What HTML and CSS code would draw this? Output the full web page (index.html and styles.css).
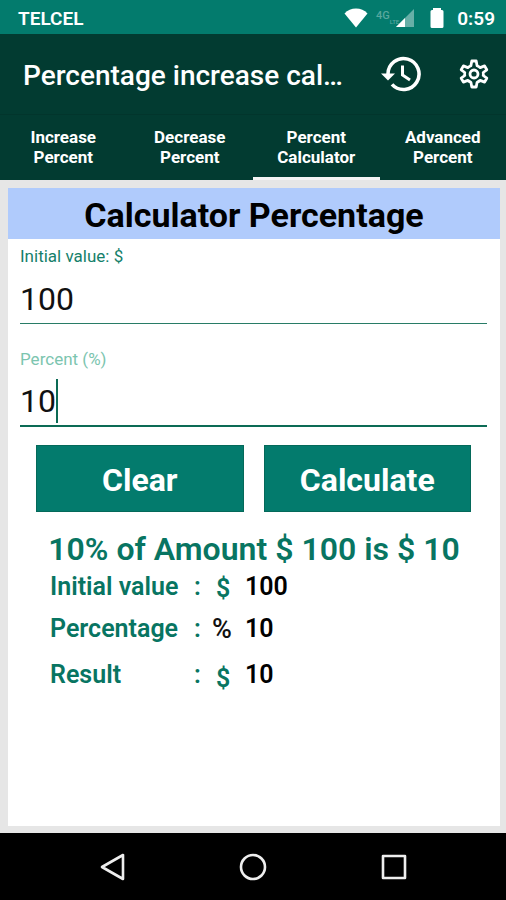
FILE: index.html
```html
<!DOCTYPE html>
<html lang="en">
<head>
<meta charset="utf-8">
<meta name="viewport" content="width=device-width, initial-scale=1">
<title>Percentage increase calculator</title>
<link rel="stylesheet" href="styles.css">
</head>
<body>
<div class="status">
  <span class="carrier">TELCEL</span>
  <svg class="wifi" width="24" height="20" viewBox="0 0 24 20" fill="#fff" aria-hidden="true"><path d="M12 19.500L.5 5.500C3.500 2.200 7.500.5 12 .5s8.500 1.700 11.500 5z"/></svg>
  <span class="network"><span>4G</span><small>LTE</small></span>
  <svg class="signal" width="18" height="18" viewBox="0 0 18 18" aria-hidden="true"><path d="M18 0v18H0z" fill="#fff" opacity=".4"/><path d="M9 9v9H0z" fill="#fff"/></svg>
  <svg class="battery" width="14" height="20" viewBox="0 0 14 20" fill="#fff" aria-hidden="true"><path d="M3 0h8v2h1q1.500 0 1.500 1.500v15q0 1.500-1.500 1.500H2q-1.500 0-1.500-1.500v-15q0-1.500 1.500-1.500h1z"/></svg>
  <time>0:59</time>
</div>
<header class="appbar">
  <h1>Percentage increase cal…</h1>
  <button class="icon" type="button" aria-label="History">
    <svg width="42" height="40" viewBox="0 0 42 40" fill="none" stroke="#fff" aria-hidden="true"><path d="M8 20a15.500 15.500 0 1 1 4 10.400" stroke-width="3.600"/><path d="M1 19.500h14L8 26.500z" fill="#fff" stroke="none"/><path d="M22.500 11.500v9.500l7.500 5" stroke-width="3"/></svg>
  </button>
  <button class="icon" type="button" aria-label="Settings">
    <svg width="30" height="32" viewBox="0 0 30 32" fill="none" stroke="#fff" stroke-width="2.800" stroke-linejoin="round" aria-hidden="true"><path d="M12.800 3h4.400l.9 4.800q1.800.7 3.100 1.800l4.400-1.700 2.200 3.900-3.600 2.700q.4 1.500 0 3l3.600 2.700-2.200 3.900-4.400-1.700q-1.300 1.100-3.100 1.800l-.9 4.800h-4.400l-.9-4.800q-1.800-.7-3.100-1.800l-4.400 1.700-2.200-3.900 3.600-2.700q-.4-1.500 0-3l-3.600-2.700 2.200-3.900 4.400 1.700q1.300-1.100 3.100-1.800z"/><circle cx="15" cy="16" r="4"/></svg>
  </button>
</header>
<nav class="tabs">
  <a href="#increase">Increase<br>Percent</a>
  <a href="#decrease">Decrease<br>Percent</a>
  <a class="active" href="#percent" aria-current="page">Percent<br>Calculator</a>
  <a href="#advanced">Advanced<br>Percent</a>
</nav>
<main>
  <section class="card">
    <h2>Calculator Percentage</h2>
    <form>
      <div class="field">
        <label for="initial">Initial value: $</label>
        <input id="initial" type="text" inputmode="decimal" value="100">
      </div>
      <div class="field focused">
        <label for="percent">Percent (%)</label>
        <div class="entry">
          <input id="percent" type="text" inputmode="decimal" value="10">
          <span class="caret"></span>
        </div>
      </div>
      <div class="actions">
        <button type="reset">Clear</button>
        <button type="button">Calculate</button>
      </div>
    </form>
    <p class="summary">10% of Amount $ 100 is $ 10</p>
    <table class="results">
      <tr><th scope="row">Initial value</th><td class="colon">:</td><td class="unit">$</td><td>100</td></tr>
      <tr><th scope="row">Percentage</th><td class="colon">:</td><td class="unit dark">%</td><td>10</td></tr>
      <tr class="total"><th scope="row">Result</th><td class="colon">:</td><td class="unit">$</td><td>10</td></tr>
    </table>
  </section>
</main>
<footer class="navbar">
  <button class="icon" type="button" aria-label="Back"><svg width="28" height="28" viewBox="0 0 28 28" fill="none" stroke="#eee" stroke-width="2.600" stroke-linejoin="round" aria-hidden="true"><path d="M25 2v24L4 14z"/></svg></button>
  <button class="icon" type="button" aria-label="Home"><svg width="28" height="28" viewBox="0 0 28 28" fill="none" stroke="#eee" stroke-width="2.600" aria-hidden="true"><circle cx="14" cy="14" r="12"/></svg></button>
  <button class="icon" type="button" aria-label="Recent apps"><svg width="28" height="28" viewBox="0 0 28 28" fill="none" stroke="#eee" stroke-width="2.600" stroke-linejoin="round" aria-hidden="true"><path d="M3 3h22v22H3z"/></svg></button>
</footer>
</body>
</html>
```
FILE: styles.css
```css
* { box-sizing: border-box; }

body {
  margin: 0;
  min-height: 100vh;
  display: flex;
  flex-direction: column;
  background: #e6e6e6;
  color: #000;
  font-family: Roboto, "Liberation Sans", sans-serif;
}

h1, h2, p { margin: 0; }

button, input { font: inherit; }

.status {
  display: flex;
  align-items: center;
  height: 34px;
  padding: 2px 11px 0 18px;
  background: #037b6d;
  color: #fff;
  font-size: 19px;
  font-weight: 600;
}

.carrier { flex: 1; }

.network {
  display: flex;
  align-items: center;
  margin-left: 8px;
  color: #58a89e;
  font-size: 11px;
  font-weight: 500;
}

.network span { padding-bottom: 6px; }

.network small {
  font-size: 6px;
  padding-top: 6px;
}

.signal { margin-left: -3px; }

.battery { margin: 0 13px 0 16px; }

.icon {
  display: flex;
  padding: 0;
  border: 0;
  background: none;
}

.appbar {
  display: flex;
  align-items: center;
  height: 80px;
  padding: 0 18px 0 23px;
  background: #023b31;
  color: #fff;
}

.appbar h1 {
  flex: 1;
  padding-top: 3px;
  white-space: nowrap;
  font-size: 28px;
  line-height: 36px;
  font-weight: 500;
}

.appbar .icon { margin-left: 37px; }

.tabs {
  display: grid;
  grid-template-columns: repeat(4, 1fr);
  height: 66px;
  background: #023b31;
  border-top: 1px solid #02352c;
}

.tabs a {
  padding-top: 12px;
  border-bottom: 3px solid transparent;
  color: #fff;
  font-size: 17px;
  line-height: 20px;
  font-weight: 700;
  text-align: center;
  text-decoration: none;
}

.tabs .active { border-color: #f4f4f4; }

main {
  flex: 1;
  display: flex;
  padding: 8px 6px 7px 8px;
}

.card {
  flex: 1;
  background: #fff;
}

.card h2 {
  padding-top: 3px;
  background: #b0cbfc;
  font-size: 34px;
  line-height: 48px;
  font-weight: 700;
  text-align: center;
}

form { padding: 7px 13px 0 12px; }

.field {
  display: flex;
  flex-direction: column;
  margin-bottom: 25px;
}

.field label {
  color: #15806a;
  font-size: 17px;
  line-height: 20px;
}

.field input {
  width: 100%;
  height: 58px;
  padding: 8px 0 0;
  border: 0;
  border-bottom: 1px solid #287c66;
  border-radius: 0;
  outline: 0;
  background: none;
  color: #111;
  font-size: 32px;
}

.focused { margin-bottom: 18px; }

.focused label { color: #7cc5af; }

.focused input { border-bottom: 2px solid #0c6b55; }

.entry {
  display: flex;
  position: relative;
}

.caret {
  position: absolute;
  left: 36px;
  top: 10px;
  width: 2px;
  height: 44px;
  background: #0c6b55;
}

.actions {
  display: grid;
  grid-template-columns: 1fr 1fr;
  gap: 20px;
  padding: 0 16px;
}

.actions button {
  height: 67px;
  padding: 2px 0 0;
  border: 1px solid #04695a;
  border-radius: 0;
  background: #037b6d;
  color: #fff;
  font-size: 32px;
  font-weight: 700;
}

.summary {
  margin-top: 18px;
  color: #087562;
  font-size: 32px;
  line-height: 38px;
  font-weight: 600;
  text-align: center;
}

.results {
  margin: 2px 0 0 42px;
  border-collapse: collapse;
  font-size: 25px;
  line-height: 34px;
  font-weight: 600;
}

.results th,
.results td {
  padding: 0 0 8px;
  text-align: left;
  vertical-align: top;
}

.results th {
  width: 144px;
  color: #087562;
  font-weight: 600;
}

.results .colon {
  width: 17px;
  color: #087562;
}

.results .unit {
  width: 34px;
  padding: 2px 0 6px 5px;
  color: #087562;
}

.results .dark {
  padding: 0 0 8px 1px;
  color: #111;
  font-size: 27px;
  font-weight: 500;
}

.results .total th,
.results .total td { padding-top: 4px; }

.results .total .unit { padding-top: 8px; }

.navbar {
  display: grid;
  grid-template-columns: repeat(3, 141px);
  justify-content: center;
  justify-items: center;
  align-items: center;
  height: 67px;
  background: #000;
}
```
